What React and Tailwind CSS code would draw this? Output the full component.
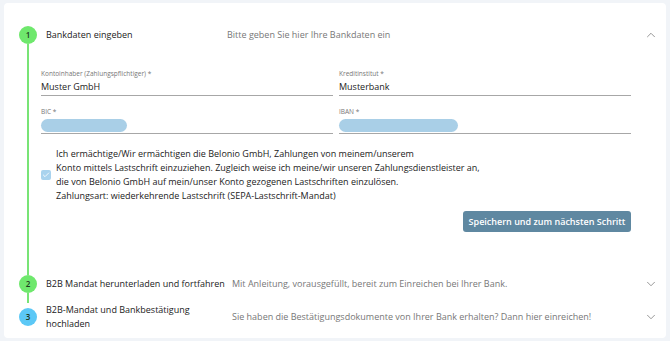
import { ChevronDown, ChevronUp, Check } from "lucide-react";

const font = { fontFamily: '"Open Sans", "Liberation Sans", sans-serif' };

const Field = ({ label, value, pill }) => (
  <div className="flex flex-col">
    <span className="h-[10px] text-[6.5px] leading-[10px] text-[#777]">{label}</span>
    <div className="flex h-[17px] items-center border-b border-[#a7a7a7]">
      {pill ? (
        <span className={`h-[13px] rounded-full bg-[#a9cfe7] ${pill}`} />
      ) : (
        <span className="text-[9px] font-medium leading-[14px] text-[#222]">{value}</span>
      )}
    </div>
  </div>
);

const StepCircle = ({ n, color }) => (
  <div
    className={`flex h-[18px] w-[18px] shrink-0 items-center justify-center rounded-full text-[8px] font-semibold text-[#1f3a1f] ${color}`}
  >
    {n}
  </div>
);

export default function App() {
  return (
    <div className="min-h-[341px] w-[670px] bg-[#f1f4f8] px-[4px] pt-[3px] pb-[4px]" style={font}>
      <div className="rounded-[4px] bg-white pl-[15px] pr-[8px] pt-[23px] pb-[7px]">
        {/* Step 1 */}
        <div className="flex">
          <div className="flex w-[18px] flex-col items-center">
            <StepCircle n="1" color="bg-[#6fe86d]" />
            <div className="w-[2px] flex-1 bg-[#78e476]" />
          </div>
          <div className="flex-1 pl-[4px] pb-[43px]">
            <div className="flex h-[18px] items-center">
              <span className="w-[186px] shrink-0 pl-[5px] text-[9px] font-medium text-[#222]">Bankdaten eingeben</span>
              <span className="flex-1 text-[9px] text-[#777]">Bitte geben Sie hier Ihre Bankdaten ein</span>
              <ChevronUp size={14} strokeWidth={1.3} className="text-[#777]" />
            </div>
            <div className="mr-[27px] mt-[25px] grid grid-cols-2 gap-x-[6px] gap-y-[11px]">
              <Field label="Kontoinhaber (Zahlungspflichtiger) *" value="Muster GmbH" />
              <Field label="Kreditinstitut *" value="Musterbank" />
              <Field label="BIC *" pill="w-[86px]" />
              <Field label="IBAN *" pill="w-[119px]" />
            </div>
            <div className="mt-[13px] flex items-center gap-[5px]">
              <div className="flex h-[10px] w-[10px] items-center justify-center rounded-[2px] bg-[#a9d3ee]">
                <Check size={8} strokeWidth={2.5} className="text-white" />
              </div>
              <p className="text-[9px] leading-[14px] text-[#222]">
                Ich ermächtige/Wir ermächtigen die Belonio GmbH, Zahlungen von meinem/unserem
                <br />
                Konto mittels Lastschrift einzuziehen. Zugleich weise ich meine/wir unseren Zahlungsdienstleister an,
                <br />
                die von Belonio GmbH auf mein/unser Konto gezogenen Lastschriften einzulösen.
                <br />
                Zahlungsart: wiederkehrende Lastschrift (SEPA-Lastschrift-Mandat)
              </p>
            </div>
            <div className="mr-[27px] mt-[8px] flex justify-end">
              <button
                type="button"
                className="h-[21px] w-[168px] rounded-[3px] bg-[#5f88a1] text-[9px] font-semibold text-white"
              >
                Speichern und zum nächsten Schritt
              </button>
            </div>
          </div>
        </div>

        {/* Step 2 */}
        <div className="flex">
          <div className="flex w-[18px] flex-col items-center">
            <StepCircle n="2" color="bg-[#6fe86d]" />
            <div className="h-[10px] w-[2px] bg-[#78e476]" />
          </div>
          <div className="flex h-[18px] flex-1 items-center pl-[9px]">
            <span className="w-[186px] shrink-0 text-[9px] font-medium text-[#222]">B2B Mandat herunterladen und fortfahren</span>
            <span className="flex-1 text-[9px] text-[#777]">Mit Anleitung, vorausgefüllt, bereit zum Einreichen bei Ihrer Bank.</span>
            <ChevronDown size={14} strokeWidth={1.3} className="text-[#777]" />
          </div>
        </div>

        {/* Step 3 */}
        <div className="flex items-center">
          <StepCircle n="3" color="bg-[#5cc8f6]" />
          <div className="flex flex-1 items-center pl-[9px]">
            <span className="w-[186px] shrink-0 pr-[24px] text-[9px] font-medium leading-[14px] text-[#222]">
              B2B-Mandat und Bankbestätigung hochladen
            </span>
            <span className="flex-1 text-[9px] text-[#777]">
              Sie haben die Bestätigungsdokumente von Ihrer Bank erhalten? Dann hier einreichen!
            </span>
            <ChevronDown size={14} strokeWidth={1.3} className="text-[#777]" />
          </div>
        </div>
      </div>
    </div>
  );
}
